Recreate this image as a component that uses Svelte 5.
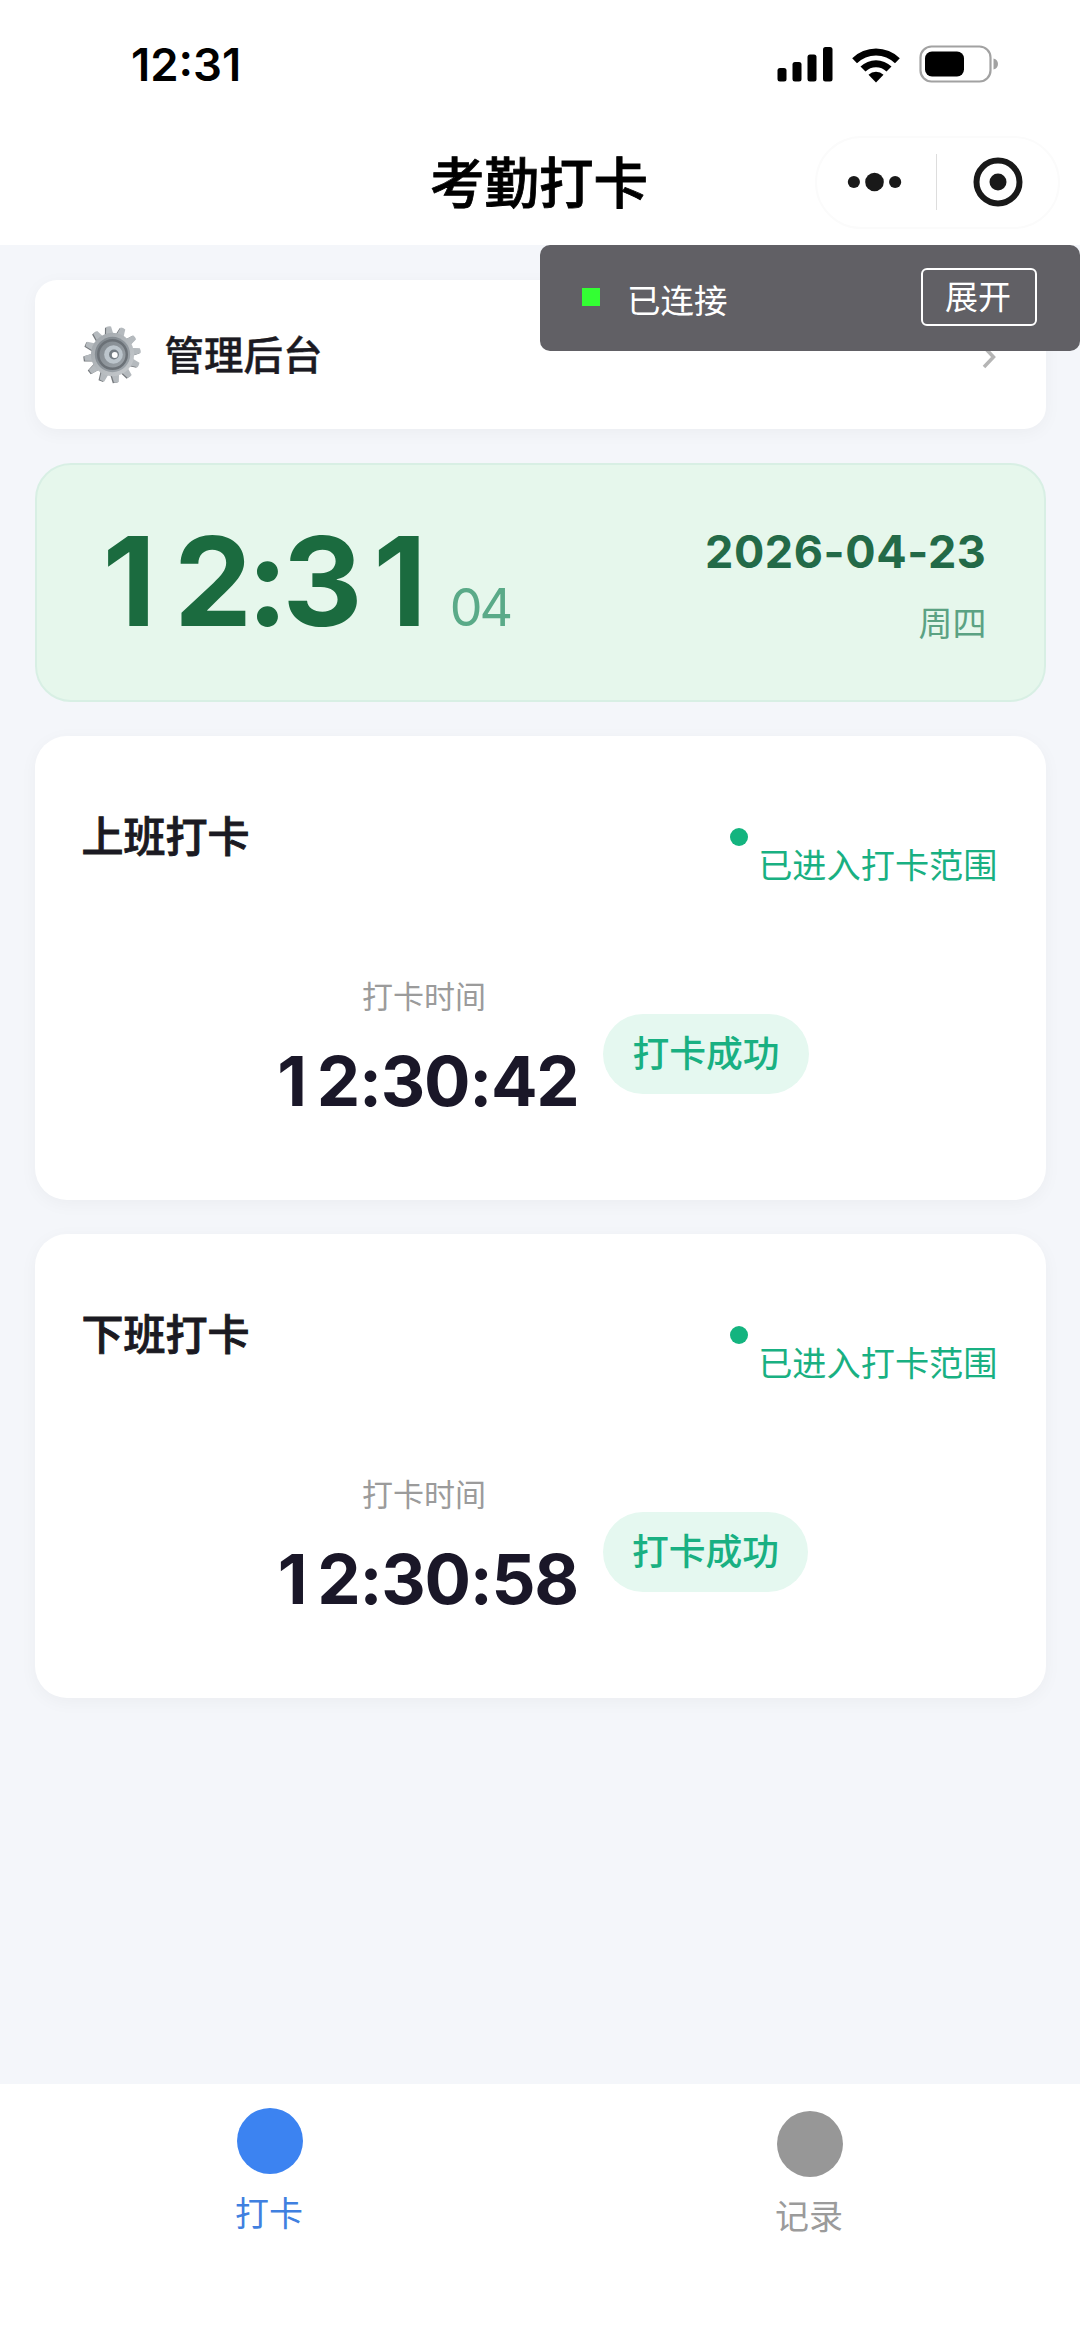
<script lang="ts">
  interface Punch {
    title: string;
    time: string;
  }

  const punches: Punch[] = [
    { title: '上班打卡', time: '12:30:42' },
    { title: '下班打卡', time: '12:30:58' },
  ];

  const tabs = [
    { label: '打卡', active: true },
    { label: '记录', active: false },
  ];

  // 12 teeth, evenly spread round the rim
  const teeth = Array.from({ length: 12 }, (_, i) => i * 30 - 8);
</script>

<!-- Only the "1" gets a fixed cell: Inter's tabular "1" has a foot serif -->
{#snippet digits(time: string)}
  {#each time.split(/(1)/) as part}{#if part === '1'}<span class="one">1</span>{:else}{part}{/if}{/each}
{/snippet}

<div class="page">
  <header class="nav">
    <div class="status">
      <span class="status-time">12:31</span>
      <div class="status-icons">
        <svg class="signal" viewBox="0 0 56 36">
          <rect x="0.5" y="22" width="9" height="13.5" rx="2.5" />
          <rect x="15.5" y="16" width="9" height="19.5" rx="2.5" />
          <rect x="30.5" y="8.5" width="9" height="27" rx="2.5" />
          <rect x="46" y="1" width="9.5" height="34.5" rx="2.5" />
        </svg>
        <svg class="wifi" viewBox="0 0 50 37">
          <path d="M1.2 12.2a34 34 0 0 1 47.6 0l-4.8 5a27 27 0 0 0-38 0z" />
          <path d="M9.5 20.6a22.2 22.2 0 0 1 31 0l-5 5a15 15 0 0 0-21 0z" />
          <path d="M17.5 28.8a10.8 10.8 0 0 1 15 0L25 36.5z" />
        </svg>
        <svg class="battery" viewBox="0 0 80 38">
          <rect x="1.5" y="1.5" width="70" height="35" rx="11" fill="none" stroke="#a2a2a2" stroke-width="2.2" />
          <rect x="6" y="6.5" width="39" height="25" rx="7" />
          <path d="M74.5 13.5c3 .8 4.5 3 4.5 5.5s-1.5 4.7-4.5 5.5z" fill="#a2a2a2" />
        </svg>
      </div>
    </div>

    <div class="title-bar">
      <h1>考勤打卡</h1>
      <div class="capsule">
        <svg class="more" viewBox="0 0 56 20">
          <circle cx="7" cy="10" r="6.2" />
          <circle cx="28" cy="10" r="9.5" />
          <circle cx="49" cy="10" r="6.2" />
        </svg>
        <span class="divider"></span>
        <svg class="close" viewBox="0 0 50 50">
          <circle cx="25" cy="25" r="21.5" fill="none" stroke="#191919" stroke-width="6" />
          <circle cx="25" cy="25" r="8.5" />
        </svg>
      </div>
    </div>
  </header>

  <main>
    <section class="card admin">
      <svg class="gear" viewBox="0 0 60 60">
        <defs>
          <linearGradient id="rim" x1="0" y1="0" x2="1" y2="1">
            <stop offset="0" stop-color="#9da3a8" />
            <stop offset="1" stop-color="#c9cdd0" />
          </linearGradient>
          <linearGradient id="dish" x1="0" y1="0" x2="1" y2="1">
            <stop offset="0" stop-color="#7d848a" />
            <stop offset="1" stop-color="#a0a7ad" />
          </linearGradient>
        </defs>
        {#each teeth as angle}
          <g transform="translate(-1.2 0.6) rotate({angle} 30 30)">
            <path d="M26 11 27.5 1.5h5L34 11z" fill="#74787c" />
          </g>
        {/each}
        {#each teeth as angle}
          <g transform="rotate({angle} 30 30)">
            <path d="M26 11 27.5 1.5q2.5-.8 5 0L34 11z" fill="#b5babe" />
          </g>
        {/each}
        <circle cx="30" cy="30" r="22" fill="url(#rim)" />
        <circle cx="30" cy="30" r="18" fill="url(#dish)" />
        <circle cx="30" cy="30" r="14.5" fill="none" stroke="#6b7177" stroke-width="2.5" />
        <circle cx="31" cy="30" r="9.5" fill="#bcc5cc" />
        <circle cx="31.5" cy="30" r="5" fill="#747c83" />
        <circle cx="32.3" cy="30.5" r="3" fill="#fff" />
      </svg>
      <span class="admin-label">管理后台</span>
      <svg class="chevron" viewBox="0 0 14 24">
        <path d="M2 2l9.5 10L2 22" fill="none" stroke="#b5b5b5" stroke-width="3.5" />
      </svg>
    </section>

    <section class="clock">
      <div class="clock-time">
        <span class="hm">{@render digits('12:31')}</span>
        <span class="sec">04</span>
      </div>
      <div class="clock-date">
        <span class="date">2026-04-23</span>
        <span class="weekday">周四</span>
      </div>
    </section>

    {#each punches as punch}
      <section class="card punch">
        <div class="punch-head">
          <h2>{punch.title}</h2>
          <div class="range">
            <span class="dot"></span>
            <span class="range-text">已进入打卡范围</span>
          </div>
        </div>
        <div class="punch-body">
          <div class="record">
            <span class="record-label">打卡时间</span>
            <span class="record-time">{@render digits(punch.time)}</span>
          </div>
          <span class="badge">打卡成功</span>
        </div>
      </section>
    {/each}
  </main>

  <nav class="tabbar">
    {#each tabs as tab}
      <div class="tab" class:active={tab.active}>
        <span class="tab-icon"></span>
        <span class="tab-label">{tab.label}</span>
      </div>
    {/each}
  </nav>

  <!-- debug connection panel, floats over the page -->
  <div class="debug">
    <span class="led"></span>
    <span class="debug-text">已连接</span>
    <button>展开</button>
  </div>
</div>

<style>
  :global(body) {
    background: #f4f6fa;
  }
  .page {
    position: relative;
    box-sizing: border-box;
    width: 1080px;
    height: 2339px;
    display: flex;
    flex-direction: column;
    overflow: hidden;
    background: #f4f6fa;
    font-family: Inter, 'Noto Sans CJK SC', sans-serif;
    color: #1b1a22;
  }
  span,
  h1,
  h2 {
    display: block;
    white-space: nowrap;
  }
  h1,
  h2 {
    margin: 0;
  }
  .one {
    display: inline-block;
    width: 0.658em;
    letter-spacing: 0;
    text-align: center;
  }

  .nav {
    height: 245px;
    background: #fff;
    flex: none;
  }
  .status {
    display: flex;
    justify-content: space-between;
    align-items: center;
    height: 128px;
    padding: 0 81px 0 131px;
  }
  .status-time {
    padding-top: 2px;
    font-size: 45.5px;
    font-weight: 600;
    line-height: 54px;
    color: #000;
  }
  .status-icons {
    display: flex;
    align-items: center;
    gap: 18px;
  }
  .signal {
    width: 56px;
    height: 36px;
  }
  .wifi {
    width: 50px;
    height: 37px;
  }
  .battery {
    width: 80px;
    height: 38px;
  }
  .title-bar {
    display: grid;
    grid-template-columns: 1fr auto 1fr;
    align-items: center;
    height: 108px;
    padding: 0 20px;
  }
  h1 {
    grid-column: 2;
    padding: 2px 2px 0 0;
    font-size: 54.5px;
    font-weight: 500;
    line-height: 60px;
    color: #000;
    -webkit-text-stroke: 0.8px #000;
  }
  .capsule {
    justify-self: end;
    box-sizing: border-box;
    display: flex;
    align-items: center;
    width: 245px;
    height: 93px;
    padding: 0 35px 1px 30px;
    border: 2px solid #fbfbfb;
    border-radius: 47px;
    fill: #191919;
  }
  .more {
    width: 56px;
    height: 20px;
  }
  .divider {
    width: 1px;
    height: 56px;
    margin: 0 36px 0 34px;
    background: #ddd;
  }
  .close {
    width: 50px;
    height: 50px;
    flex: none;
  }

  main {
    flex: 1;
    display: flex;
    flex-direction: column;
    gap: 34px;
    padding: 35px 34.5px 0;
  }
  .card {
    box-sizing: border-box;
    background: #fff;
    box-shadow: 0 4px 18px rgba(0, 0, 0, 0.04);
  }
  .admin {
    display: flex;
    align-items: center;
    height: 149px;
    padding: 0 50px 0 48px;
    border-radius: 22px;
  }
  .gear {
    width: 59px;
    height: 59px;
  }
  .admin-label {
    flex: 1;
    margin-left: 23px;
    padding-top: 2px;
    font-size: 39.5px;
    font-weight: 500;
    line-height: 44px;
    -webkit-text-stroke: 0.4px #1b1a22;
  }
  .chevron {
    width: 14px;
    height: 24px;
    margin-top: 4px;
  }

  .clock {
    box-sizing: border-box;
    display: flex;
    justify-content: space-between;
    height: 239px;
    padding: 0 57px 0 51px;
    border: 2px solid #d8efe4;
    border-radius: 36px;
    background: #e6f7ec;
  }
  .clock-time {
    display: flex;
    align-items: baseline;
    height: 150px;
    margin-top: 41px;
  }
  .hm {
    font-size: 124px;
    font-weight: 700;
    line-height: 150px;
    letter-spacing: -5.5px;
    color: #1b6b3f;
  }
  .hm .one:first-child {
    margin: 0 4px 0 1px;
  }
  .hm .one:last-child {
    margin-left: 2px;
  }
  .sec {
    margin-left: 9px;
    font-size: 52px;
    line-height: 60px;
    letter-spacing: -3px;
    color: #5aaa88;
  }
  .clock-date {
    display: flex;
    flex-direction: column;
    align-items: flex-end;
    padding-top: 60px;
  }
  .date {
    font-size: 45px;
    font-weight: 700;
    line-height: 54px;
    letter-spacing: 0.6px;
    color: #236a48;
  }
  .weekday {
    margin-top: 25px;
    font-size: 34px;
    line-height: 40px;
    color: #5ba283;
  }

  .punch {
    height: 464px;
    padding: 78px 48px 0;
    border-radius: 32px;
  }
  .punch-head {
    display: flex;
    justify-content: space-between;
    height: 167px;
  }
  h2 {
    margin-left: -1px;
    font-size: 42px;
    font-weight: 500;
    line-height: 46px;
    -webkit-text-stroke: 0.9px #1b1a22;
  }
  .range {
    display: flex;
    gap: 10px;
    color: #19b082;
  }
  .dot {
    width: 18px;
    height: 18px;
    margin-top: 14px;
    border-radius: 50%;
    background: #14b47f;
  }
  .range-text {
    margin-top: 32px;
    font-size: 34.2px;
    line-height: 40px;
  }
  .punch-body {
    display: flex;
    justify-content: center;
    gap: 25px;
    padding-right: 2px;
  }
  .record {
    display: flex;
    flex-direction: column;
    align-items: center;
  }
  .record-label {
    font-size: 31px;
    line-height: 32px;
    color: #9b9b9b;
  }
  .record-time {
    margin-top: 26px;
    font-size: 69px;
    font-weight: 700;
    line-height: 84px;
    letter-spacing: -1.3px;
    color: #1a1728;
  }
  .record-time .one {
    margin-right: 2px;
  }
  .badge {
    height: 80px;
    margin-top: 33px;
    padding: 0 29px;
    border-radius: 40px;
    background: #e5f8f0;
    font-size: 36.8px;
    font-weight: 500;
    line-height: 79px;
    color: #19b082;
  }

  .tabbar {
    display: flex;
    flex: none;
    height: 255px;
    background: #fff;
  }
  .tab {
    flex: 1;
    display: flex;
    flex-direction: column;
    align-items: center;
    padding-top: 27px;
    color: #9b9b9b;
  }
  .tab-icon {
    width: 66px;
    height: 66px;
    border-radius: 50%;
    background: #979797;
  }
  .tab-label {
    margin-top: 19px;
    padding-right: 2px;
    font-size: 34px;
    line-height: 42px;
  }
  .tab.active {
    padding-top: 24px;
    color: #4080e0;
  }
  .active .tab-icon {
    background: #3c83f1;
  }

  .debug {
    position: absolute;
    top: 245px;
    right: 0;
    box-sizing: border-box;
    display: flex;
    align-items: center;
    width: 540px;
    height: 106px;
    padding: 0 43px 0 42px;
    border-radius: 10px;
    background: #616065;
    color: #fff;
  }
  .led {
    width: 18px;
    height: 18px;
    margin-bottom: 2px;
    background: #33ff33;
  }
  .debug-text {
    flex: 1;
    margin-left: 27px;
    padding-top: 5px;
    font-size: 33.5px;
    line-height: 40px;
  }
  button {
    box-sizing: border-box;
    width: 116px;
    height: 58px;
    margin-bottom: 2px;
    padding: 0 2px 0 0;
    border: 2.5px solid #fff;
    border-radius: 6px;
    background: none;
    color: inherit;
    font: inherit;
    font-size: 33px;
    line-height: 50px;
  }
</style>
